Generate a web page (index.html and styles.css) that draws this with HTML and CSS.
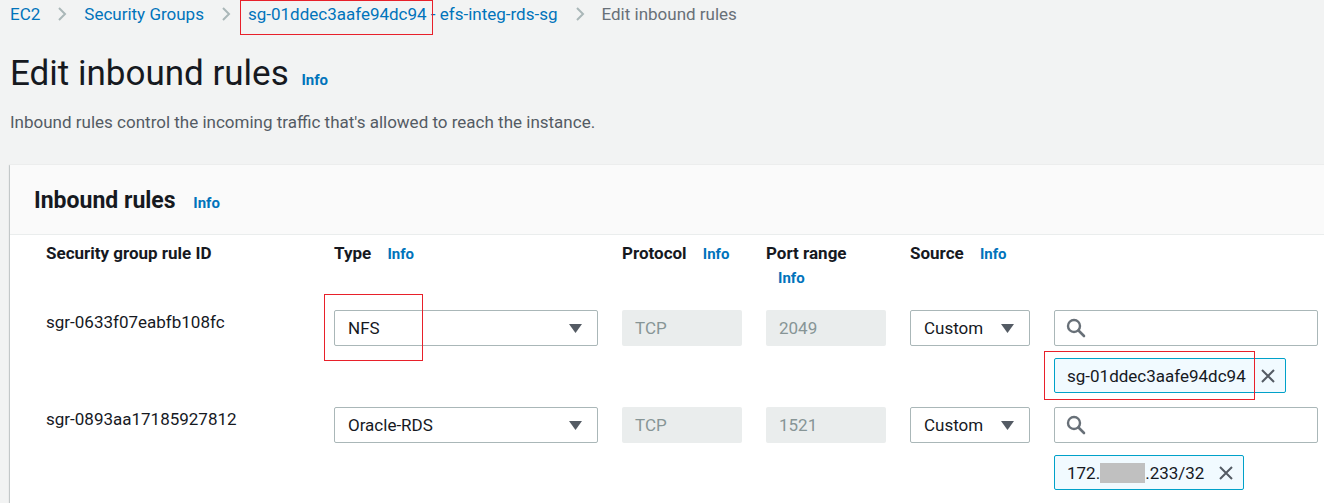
FILE: index.html
```html
<!DOCTYPE html>
<html>
<head>
<meta charset="utf-8">
<link rel="stylesheet" href="styles.css">
</head>
<body>
<div class="page">
  <nav class="crumbs">
    <a class="crumb">EC2</a>
    <svg class="chev" width="10" height="16" viewBox="0 0 10 16"><path d="M2 2l6 6-6 6" fill="none" stroke="#aab7b8" stroke-width="2"/></svg>
    <a class="crumb">Security Groups</a>
    <svg class="chev" width="10" height="16" viewBox="0 0 10 16"><path d="M2 2l6 6-6 6" fill="none" stroke="#aab7b8" stroke-width="2"/></svg>
    <a class="crumb crumb-marked">sg-01ddec3aafe94dc94<span class="mark mark-crumb"></span></a><a class="crumb">&nbsp;- efs-integ-rds-sg</a>
    <svg class="chev" width="10" height="16" viewBox="0 0 10 16"><path d="M2 2l6 6-6 6" fill="none" stroke="#aab7b8" stroke-width="2"/></svg>
    <span class="crumb current">Edit inbound rules</span>
  </nav>

  <h1 class="title">Edit inbound rules <a class="info">Info</a></h1>
  <p class="desc">Inbound rules control the incoming traffic that's allowed to reach the instance.</p>

  <section class="card">
    <div class="card-head">
      <h2 class="card-title">Inbound rules <a class="info">Info</a></h2>
    </div>
    <div class="card-body">
      <div class="grid head-row">
        <div class="col-label">Security group rule ID</div>
        <div class="col-label">Type <a class="info">Info</a></div>
        <div class="col-label">Protocol <a class="info">Info</a></div>
        <div class="col-label">Port range <a class="info">Info</a></div>
        <div class="col-label">Source <a class="info">Info</a></div>
        <div></div>
      </div>

      <div class="grid rule-row">
        <div class="rule-id">sgr-0633f07eabfb108fc</div>
        <div class="select marked">NFS
          <svg class="caret" width="13" height="9" viewBox="0 0 13 9"><path d="M0 0h13L6.5 9z" fill="#545b64"/></svg>
          <span class="mark mark-nfs"></span>
        </div>
        <div class="disabled">TCP</div>
        <div class="disabled">2049</div>
        <div class="select">Custom
          <svg class="caret" width="13" height="9" viewBox="0 0 13 9"><path d="M0 0h13L6.5 9z" fill="#545b64"/></svg>
        </div>
        <div class="source">
          <div class="search">
            <svg width="20" height="20" viewBox="0 0 20 20"><circle cx="8" cy="8" r="6" fill="none" stroke="#687078" stroke-width="2.4"/><path d="M12.5 12.5l5.5 5.5" stroke="#687078" stroke-width="2.6" stroke-linecap="round"/></svg>
          </div>
          <div class="token-line">
            <div class="token marked">sg-01ddec3aafe94dc94
              <svg class="x" width="16" height="16" viewBox="0 0 16 16"><path d="M2 2l12 12M14 2L2 14" stroke="#545b64" stroke-width="2"/></svg>
              <span class="mark mark-token"></span>
            </div>
          </div>
        </div>
      </div>

      <div class="grid rule-row">
        <div class="rule-id">sgr-0893aa17185927812</div>
        <div class="select">Oracle-RDS
          <svg class="caret" width="13" height="9" viewBox="0 0 13 9"><path d="M0 0h13L6.5 9z" fill="#545b64"/></svg>
        </div>
        <div class="disabled">TCP</div>
        <div class="disabled">1521</div>
        <div class="select">Custom
          <svg class="caret" width="13" height="9" viewBox="0 0 13 9"><path d="M0 0h13L6.5 9z" fill="#545b64"/></svg>
        </div>
        <div class="source">
          <div class="search">
            <svg width="20" height="20" viewBox="0 0 20 20"><circle cx="8" cy="8" r="6" fill="none" stroke="#687078" stroke-width="2.4"/><path d="M12.5 12.5l5.5 5.5" stroke="#687078" stroke-width="2.6" stroke-linecap="round"/></svg>
          </div>
          <div class="token-line">
            <div class="token">172.<span class="redact"></span>.233/32
              <svg class="x" width="16" height="16" viewBox="0 0 16 16"><path d="M2 2l12 12M14 2L2 14" stroke="#545b64" stroke-width="2"/></svg>
            </div>
          </div>
        </div>
      </div>
    </div>
  </section>
</div>
</body>
</html>
```

FILE: styles.css
```css
html, body {
  margin: 0;
  padding: 0;
  overflow: hidden;
  background: #f2f3f3;
}
body {
  font-family: Roboto, "Noto Sans", Arial, sans-serif;
  font-size: 17px;
  color: #16191f;
}
.page {
  padding: 2px 0 0 10px;
  width: 1400px;
}
.crumbs {
  display: flex;
  align-items: center;
  height: 24px;
  line-height: 24px;
}
.crumb {
  color: #0073bb;
  white-space: nowrap;
}
.crumb.current {
  color: #687078;
}
.crumb-marked {
  position: relative;
}
.chev {
  margin: 0 17px 0 17px;
  flex: none;
}
.mark {
  position: absolute;
  border: 1px solid #e8202a;
  pointer-events: none;
}
.mark-crumb {
  left: -8px;
  top: -2px;
  width: 191px;
  height: 33px;
}
.title {
  margin: 28px 0 0 0;
  font-size: 35px;
  line-height: 40px;
  font-weight: 400;
  color: #16191f;
}
.info {
  color: #0073bb;
  font-size: 15px;
  line-height: 16px;
  font-weight: 700;
  display: inline-block;
}
.title .info {
  margin-left: 4px;
}
.desc {
  margin: 16px 0 0 0;
  line-height: 24px;
  color: #545b64;
}
.card {
  margin-top: 31px;
  background: #fff;
  box-shadow: 0 1px 1px 0 rgba(0, 28, 36, .3), -1px 0 1px 0 rgba(0, 28, 36, .15);
  width: 1400px;
  height: 400px;
}
.card-head {
  background: #fafafa;
  border-bottom: 1px solid #eaeded;
  padding: 22px 24px 19px 24px;
}
.card-title {
  margin: 0;
  font-size: 23px;
  line-height: 28px;
  font-weight: 700;
}
.card-title .info {
  margin-left: 12px;
}
.card-body {
  padding: 6px 0 0 36px;
}
.grid {
  display: grid;
  grid-template-columns: 264px 264px 120px 120px 120px 264px;
  column-gap: 24px;
  align-items: start;
}
.col-label {
  font-weight: 700;
  line-height: 24px;
}
.col-label .info {
  margin-left: 12px;
}
.head-row {
  margin-bottom: 21px;
}
.rule-row {
  margin-bottom: 14px;
}
.rule-id {
  line-height: 24px;
  color: #16191f;
}
.select {
  position: relative;
  height: 36px;
  box-sizing: border-box;
  border: 1px solid #aab7b8;
  border-radius: 2px;
  background: #fff;
  padding: 0 14px 0 13px;
  display: flex;
  align-items: center;
  justify-content: space-between;
  line-height: 24px;
}
.caret {
  flex: none;
  margin-right: 1px;
}
.disabled {
  height: 36px;
  box-sizing: border-box;
  border-radius: 2px;
  background: #eaeded;
  color: #879596;
  padding: 0 13px;
  display: flex;
  align-items: center;
}
.mark-nfs {
  left: -11px;
  top: -17px;
  width: 97px;
  height: 65px;
}
.source {
  display: flex;
  flex-direction: column;
  gap: 12px;
}
.search {
  height: 36px;
  box-sizing: border-box;
  border: 1px solid #aab7b8;
  border-radius: 2px;
  background: #fff;
  display: flex;
  align-items: center;
  padding-left: 11px;
}
.token-line {
  display: flex;
}
.token {
  position: relative;
  height: 35px;
  box-sizing: border-box;
  border: 1px solid #00a1c9;
  border-radius: 2px;
  background: #f1faff;
  display: flex;
  align-items: center;
  padding: 0 9px 0 12px;
  white-space: nowrap;
  color: #16191f;
}
.token .x {
  margin-left: 14px;
  flex: none;
}
.redact {
  display: inline-block;
  width: 45px;
  height: 20px;
  background: #c0c0c0;
}
.mark-token {
  left: -11px;
  top: -8px;
  width: 209px;
  height: 47px;
}
```
